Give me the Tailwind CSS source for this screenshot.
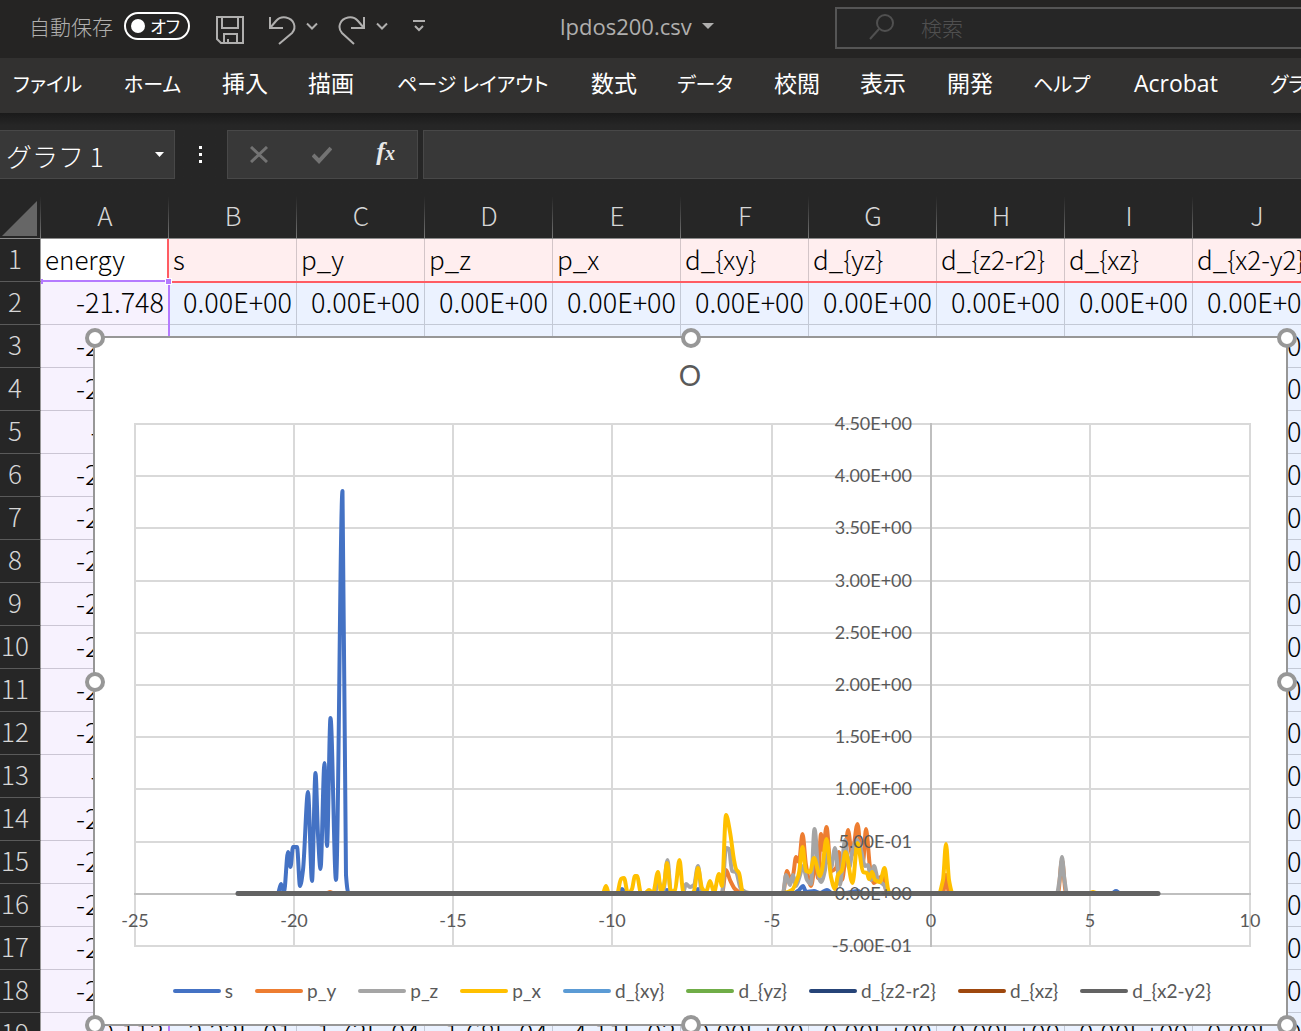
<!DOCTYPE html>
<html lang="ja">
<head>
<meta charset="utf-8">
<title>lpdos200.csv</title>
<script src="https://cdn.jsdelivr.net/npm/@tailwindcss/browser@4"></script>
</head>
<body class="flex h-screen flex-col overflow-hidden bg-[#262626] font-['Noto_Sans_CJK_JP',sans-serif]">

<header class="grid h-[58px] shrink-0 grid-cols-[560px_275px_1fr] items-center bg-[#252423] pb-[2px] text-[#b0afae]">
  <div class="flex items-center pb-1 pl-[29px]">
    <span id="autosave" class="w-[95px] text-[21px] leading-7 font-light">自動保存</span>
    <button role="switch" aria-checked="false" aria-labelledby="autosave" class="mr-6 flex h-7 w-[66px] shrink-0 items-center justify-between rounded-full border-2 border-white pr-2 pl-[5px] text-[17px] leading-5 text-white [font-feature-settings:'palt']"><span class="size-[14px] rounded-full bg-white"></span>オフ</button>
    <button aria-label="保存" class="mr-6"><svg class="mt-2" width="30" height="30" fill="none" stroke="currentColor" stroke-width="2"><path d="M3 2h26v26H7l-4-4zM8 2v11h16V2M10 28v-9h13v9M14 24v4"/></svg></button>
    <button aria-label="元に戻す" class="mr-2"><svg class="mt-2" width="30" height="30" fill="none" stroke="currentColor" stroke-width="2"><path d="M2 2v11h13M2 13L8 6C11 2.500 15 2 18 2.500c8 1.500 11 10 6 15.500L11 29"/></svg></button>
    <button aria-label="元に戻す一覧" class="mr-5"><svg width="12" height="8" fill="none" stroke="currentColor" stroke-width="2"><path d="M1 1.500l5 5 5-5"/></svg></button>
    <button aria-label="やり直し" class="mr-2"><svg class="mt-2" width="30" height="30" fill="none" stroke="currentColor" stroke-width="2"><path d="M26 2v11H13M26 13L20 6C17 2.500 13 2 10 2.500c-8 1.500-11 10-6 15.500L16 29"/></svg></button>
    <button aria-label="やり直し一覧" class="mr-6"><svg width="12" height="8" fill="none" stroke="currentColor" stroke-width="2"><path d="M1 1.500l5 5 5-5"/></svg></button>
    <button aria-label="クイック アクセスのカスタマイズ"><svg width="14" height="12" fill="none" stroke="currentColor" stroke-width="2"><path d="M1 1h12M3 6l4 4 4-4"/></svg></button>
  </div>
  <button class="flex items-center gap-[10px] pb-1 font-['Open_Sans','Noto_Sans',sans-serif] text-[22px] leading-7">lpdos200.csv<svg width="12" height="6" fill="currentColor"><path d="M0 0h12L6 6z"/></svg></button>
  <label class="flex h-[42px] items-center gap-[26px] border-2 border-r-0 border-[#555] bg-[#262626] pb-[2px] pl-8 text-[#505050]">
    <svg width="26" height="26" class="shrink-0" fill="none" stroke="currentColor" stroke-width="2"><circle cx="16" cy="9" r="8"/><path d="M10 15L1 25"/></svg>
    <input type="search" aria-label="検索" placeholder="検索" class="w-full min-w-0 bg-transparent text-[21px] leading-7 font-light outline-none placeholder:text-[#505050]">
  </label>
</header>

<nav class="grid h-[55px] shrink-0 grid-cols-[111px_98px_86px_89px_194px_86px_97px_86px_87px_86px_101px_136px_auto] items-baseline justify-start overflow-hidden bg-[#323130] pt-[9px] pl-[13px] font-['Open_Sans','Noto_Sans_CJK_JP',sans-serif] text-[23px] leading-8 whitespace-nowrap text-white [font-feature-settings:'palt'] *:text-left">
  <button class="text-[20px]">ファイル</button><button class="text-[20px]">ホーム</button><button>挿入</button><button>描画</button><button class="text-[20px]">ページ レイアウト</button><button>数式</button><button class="text-[20px]">データ</button><button>校閲</button><button>表示</button><button>開発</button><button class="text-[20px]">ヘルプ</button><button>Acrobat</button><button class="text-[20px]">グラフのデザイン</button>
</nav>

<section class="flex h-[83px] shrink-0 bg-linear-to-b from-[#1a1a1a] to-[#262626] to-15% pt-[17px]">
  <div class="flex h-[49px] w-[175px] shrink-0 items-center border border-l-0 border-[#484848] bg-[#383838] pr-[10px] pl-[6px] text-white">
    <input aria-label="名前ボックス" value="グラフ 1" class="mt-[2px] w-full min-w-0 bg-transparent text-[26px] leading-8 font-light outline-none">
    <button aria-label="名前の一覧"><svg width="9" height="5" fill="currentColor"><path d="M0 0h9L4.500 5z"/></svg></button>
  </div>
  <div class="flex h-[49px] w-[52px] shrink-0 flex-col items-center justify-center gap-1 pr-[2px] *:size-[3px] *:bg-white"><i></i><i></i><i></i></div>
  <div class="mr-[5px] flex h-[49px] w-[191px] shrink-0 items-center justify-between border border-[#484848] bg-[#383838] pr-[22px] pl-[22px] text-[#737373]">
    <button aria-label="キャンセル"><svg width="18" height="17" fill="none" stroke="currentColor" stroke-width="3"><path d="M1 1l16 15M17 1L1 16"/></svg></button>
    <button aria-label="入力"><svg width="20" height="18" fill="none" stroke="currentColor" stroke-width="4"><path d="M1 9l6 6L19 2"/></svg></button>
    <button aria-label="関数の挿入" class="pb-1 font-['Liberation_Serif',serif] text-[26px] leading-7 font-bold text-[#e8e8e8] italic">f<span class="text-[20px]">x</span></button>
  </div>
  <input aria-label="数式バー" class="h-[49px] min-w-0 flex-1 border border-r-0 border-[#484848] bg-[#383838] px-2 text-white outline-none">
</section>

<main class="relative min-h-0 flex-1 overflow-hidden bg-white">
  <table id="sheet" class="w-[1321px] table-fixed border-separate border-spacing-0 text-[26px] leading-8 font-light"></table>

  <!-- coloured outlines of the chart's source ranges -->
  <div class="absolute top-[43px] left-[167px] h-10 w-[2px] bg-[#ff5c63]"></div>
  <div class="absolute top-[85px] right-0 left-[172px] h-[2px] bg-[#ff5c63]"></div>
  <div class="absolute top-[84px] left-[41px] h-[2px] w-32 bg-[#b57bff]"></div>
  <div class="absolute top-[84px] bottom-0 left-[168px] w-[2px] bg-[#b57bff]"></div>
  <div class="absolute top-[82px] left-[165px] size-[7px] border border-white bg-[#b57bff]"></div>
  <div class="absolute top-[83px] left-[41px] h-[5px] w-[2px] bg-[#b57bff]"></div>

  <figure class="absolute top-[140px] left-[93px] h-[690px] w-[1195px] border-2 border-[#979797] bg-white font-[Lato,sans-serif] text-[#595959]">
    <svg id="plot" class="absolute inset-0 size-full" viewBox="95 338 1191 686" font-family="Lato, sans-serif" font-size="18" fill="#595959" role="img" aria-label="O"></svg>
    <figcaption id="legend" class="absolute inset-x-0 bottom-[21px] flex justify-center gap-[22px] pl-[3px] text-[19px] leading-6"></figcaption>
    <i class="absolute -top-[10px] -left-[10px] size-5 rounded-full border-4 border-[#979797] bg-white"></i>
    <i class="absolute -top-[10px] left-[586px] size-5 rounded-full border-4 border-[#979797] bg-white"></i>
    <i class="absolute -top-[10px] -right-[11px] size-5 rounded-full border-4 border-[#979797] bg-white"></i>
    <i class="absolute top-[334px] -left-[10px] size-5 rounded-full border-4 border-[#979797] bg-white"></i>
    <i class="absolute top-[334px] -right-[11px] size-5 rounded-full border-4 border-[#979797] bg-white"></i>
    <i class="absolute -bottom-[11px] -left-[10px] size-5 rounded-full border-4 border-[#979797] bg-white"></i>
    <i class="absolute -bottom-[11px] left-[586px] size-5 rounded-full border-4 border-[#979797] bg-white"></i>
    <i class="absolute -right-[11px] -bottom-[11px] size-5 rounded-full border-4 border-[#979797] bg-white"></i>
  </figure>
</main>

<script>
// Worksheet
const names = ['energy','s','p_y','p_z','p_x','d_{xy}','d_{yz}','d_{z2-r2}','d_{xz}','d_{x2-y2}'];
const energy = ['-21.748','-21.719','-21.690','-21.66','-21.631','-21.602','-21.573','-21.544','-21.515','-21.486','-21.457','-21.43','-21.399','-21.370','-21.341','-21.312','-21.283','-20.113'];
const last = ['2.23E-01','1.73E-04','1.68E-04','4.11E-03'];
let html = '<thead><tr class="h-[43px] text-[#d6d6d6]"><th class="w-[41px] border-b border-[#8c8c8c] bg-[#262626] bg-linear-to-b from-[#262626] to-[#777] bg-[length:1px_100%] bg-right bg-no-repeat p-0"><svg class="mt-[2px] ml-[2px]" width="35" height="35"><path d="M35 0v35H0z" fill="#666"/></svg></th>';
for (const c of 'ABCDEFGHIJ') html += '<th scope="col" class="w-32 border-b border-[#8c8c8c] bg-[#262626] bg-linear-to-b from-[#262626] to-[#777] bg-[length:1px_100%] bg-right bg-no-repeat p-0 pb-1 text-center font-light">' + c + '</th>';
html += '</tr></thead><tbody>';
for (let r = 1; r <= 19; r++) {
  html += '<tr class="h-[43px]"><th scope="row" class="border-r border-b border-r-[#999] border-b-[#5a5a5a] bg-[#262626] p-0 pr-[10px] pb-1 text-center font-light text-[#d6d6d6]">' + r + '</th>';
  for (let c = 0; c < 10; c++) {
    if (r === 1) html += c === 0
      ? '<td class="border-r border-b border-[#c9c9d2] bg-white p-0 pb-[2px] pl-1 text-black">energy</td>'
      : '<td class="border-r border-b border-[#d3c5c8] bg-[#ffeeef] p-0 pb-[2px] pl-1 whitespace-nowrap text-black">' + names[c] + '</td>';
    else if (c === 0) html += '<td class="border-r border-b border-[#cbc6d4] bg-[#f7f2fe] p-0 pr-1 pb-[2px] text-right text-[27px] text-black">' + energy[r - 2] + '</td>';
    else html += '<td class="border-r border-b border-[#c3c9d6] bg-[#ebf2ff] p-0 pr-1 pb-[2px] text-right text-[27px] text-black">' + (r === 19 && last[c - 1] || '0.00E+00') + '</td>';
  }
  html += '</tr>';
}
document.getElementById('sheet').innerHTML = html + '</tbody>';

// Smooth line through points; flat at every peak and valley
function curve(p) {
  const n = p.length, m = p.map((q, i) => {
    if (i === 0 || i === n - 1) return 0;
    const a = (q[1] - p[i-1][1]) / (q[0] - p[i-1][0]), b = (p[i+1][1] - q[1]) / (p[i+1][0] - q[0]);
    return a * b <= 0 ? 0 : 2 * a * b / (a + b);
  });
  let d = 'M' + p[0];
  for (let i = 1; i < n; i++) {
    const h = (p[i][0] - p[i-1][0]) / 3;
    d += 'C' + (p[i-1][0] + h) + ' ' + (p[i-1][1] + m[i-1] * h) + ' ' + (p[i][0] - h) + ' ' + (p[i][1] - m[i] * h) + ' ' + p[i];
  }
  return d;
}
const pts = s => s.split(' ').map(t => t.split(',').map(Number));
const series = [
  ['#4472c4', '238,893 278,893 281,884 284,892 288,852 290.5,867 293,847 297,847 300,886 303,870 308,792 312,881 315.5,773 318,835 320.5,869 324.5,763 327,846 330.5,718 336,880 342.5,491 346,875 348.5,893 618,893 622,889 626,893 664,893 667,890 671,893 695,893 698,889 702,893 794,893 799,890 803,886 806,892 814,891 820,893 827,890 832,893 845,893 858,891 862,893 1112,893 1116,891 1120,893'],
  ['#ed7d31', '327,893 330,892 333,893 620,893 722,893 726,870 730,880 735,889 741,893 783,893 787,871 790,878 793,875 796,857 799,862 802.5,834 806,865 811,886 816,860 818,878 821,834 823,850 826.5,827 831,871 836,868 839,852 842,880 845,860 848,830 852,855 857.5,824 861,855 863,862 866,829 870,867 874,883 879,878 883,876 887,893 943,893 946,875 949,893 1058,893 1062,860 1066,893'],
  ['#a5a5a5', '655,893 658,880 663,892 667.5,860 671,893 683,893 686,884 690,887 694,885 698,866 702,893 722,893 726,848 729,849 732,871 736,872 741,889 750,893 783,893 786,875 790,885 793,875 796,886 800,875 803,866 807,880 811,884 814.5,829 819,878 821,882 825,870 827,850 831,868 835,848 840,885 845,840 849,868 853,848 857,840 861,850 865,866 868,865 871,880 874,866 878,880 884,885 888,893 1057,893 1059.5,880 1062,857 1064.5,880 1067,893'],
  ['#ffc000', '600,894 603,893 606,886 609,894 617,894 621,879 624,878 628,894 632,889 635,876 637,876 641,893 645,893 649,890 653,893 658,872 661,892 664,885 667,863 671,892 675,890 679.5,860 683,891 686,894 692,893 694,891 698,868 702,888 706,892 710,881 714,892 719,874 722,886 726,815 730,832 734,860 736,869 739,873 743,893 784,893 792,890 797,880 799,873 802.5,847 806,871 810,872 814,858 820,876 822,870 826.5,839 831,877 835,889 838,875 842,870 845.5,852 852.5,883 857.5,843 863,872 867,873 869,879 872,872 875,880 880,882 884.5,868 888,889 890,894 938,894 943,880 946,844 949,880 953,894 1089,893 1093,892 1097,893']
];
const xs = [135, 294, 453, 612, 772, 931, 1090, 1250], ys = [424, 476, 528, 581, 633, 685, 737, 789, 842, 894, 946];
let g = '<g stroke="#d9d9d9" stroke-width="2">';
xs.forEach(x => g += '<path d="M' + x + ' 423V947"/>');
ys.forEach(y => g += '<path d="M134 ' + y + 'H1251"/>');
g += '</g><path d="M931 423V947M134 894H1251" stroke="#bfbfbf" stroke-width="2"/>';
series.forEach(([c, s]) => g += '<path d="' + curve(pts(s)) + '" fill="none" stroke="' + c + '" stroke-width="4" stroke-linejoin="round" stroke-linecap="round"/>');
g += '<path d="M238 893.5H1158" stroke="#636363" stroke-width="5" stroke-linecap="round"/>';
['4.50E+00','4.00E+00','3.50E+00','3.00E+00','2.50E+00','2.00E+00','1.50E+00','1.00E+00','5.00E-01','0.00E+00','-5.00E-01']
  .forEach((t, i) => g += '<text x="912" y="' + (ys[i] + 6) + '" text-anchor="end">' + t + '</text>');
[-25,-20,-15,-10,-5,0,5,10].forEach((t, i) => g += '<text x="' + xs[i] + '" y="927" text-anchor="middle">' + t + '</text>');
g += '<text x="690" y="386" text-anchor="middle" font-size="28">O</text>';
document.getElementById('plot').innerHTML = g;

const colours = ['#4472c4','#ed7d31','#a5a5a5','#ffc000','#5b9bd5','#70ad47','#264478','#9e480e','#636363'];
document.getElementById('legend').innerHTML = colours.map((c, i) =>
  '<span class="flex items-center gap-1"><i class="h-1 w-12 rounded-full" style="background:' + c + '"></i>' + names[i + 1] + '</span>').join('');
</script>
</body>
</html>
